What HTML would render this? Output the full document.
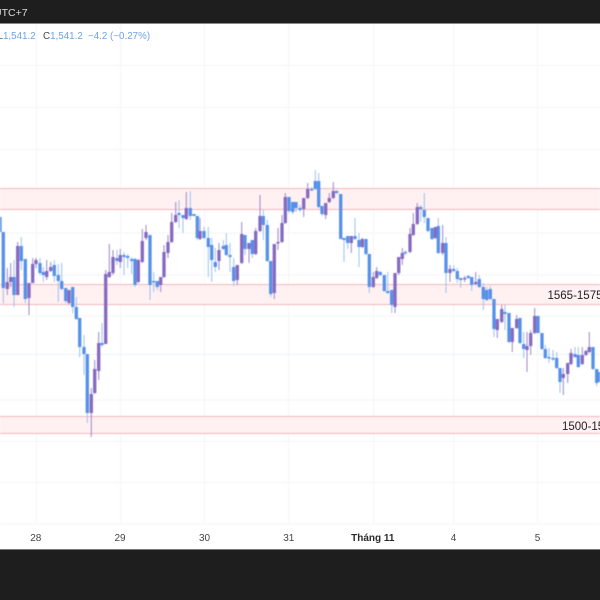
<!DOCTYPE html>
<html><head><meta charset="utf-8"><style>
html,body{margin:0;padding:0;background:#fff}
#p{position:relative;width:600px;height:600px;overflow:hidden;background:#fff;font-family:"Liberation Sans",sans-serif}
.t{position:absolute;white-space:nowrap;line-height:12px}
.a{position:absolute;top:533px;white-space:nowrap;line-height:12px;font-size:10px;color:#444;transform:translateX(-50%)}
</style></head><body><div id="p">
<svg width="600" height="600" style="position:absolute;left:0;top:0;filter:blur(.4px)" xmlns="http://www.w3.org/2000/svg">
<path fill="none" stroke="#f5f6f8" stroke-width="1" d="M36.5 23V524M120.5 23V524M204.5 23V524M288.5 23V524M373.5 23V524M453.5 23V524M537.5 23V524M0 65.5H600M0 107.5H600M0 149.5H600M0 191H600M0 233H600M0 275H600M0 316H600M0 400H600M0 441.5H600M0 482.5H600M0 524H600"/>
<path stroke="#d5e3f5" stroke-width="1" stroke-dasharray="1 1" d="M0 354.5H600"/>
<rect x="0" y="188" width="600" height="21.5" fill="#fff1f1"/>
<rect x="0" y="284.5" width="600" height="20" fill="#fff1f1"/>
<rect x="0" y="416" width="600" height="17.5" fill="#fff1f1"/>
<path fill="none" stroke="#f5b5ba" stroke-width="1.1" d="M0 188.5H600M0 209.5H600M0 284.5H600M0 304.5H600M0 416.5H600M0 433.5H600"/>
<!-- blue wicks -->
<path fill="none" stroke="#9cc0ee" stroke-width="1" d="M3.3 232V303M14 260V307M21.3 237V270M25.3 259V303M40 258V275M43.3 267V282M54.3 260V282M58.3 264V302M61.7 263V290M65.7 288V303M72.7 287V313M76.3 297V320M79.7 318V357M84 335V375M87.3 354V423M102 323V347M117 250V265M124 252V275M127.7 254V268M131.7 257V274M135 258V287M150 235V300M153.7 272V292M157.3 281V290M179 200V228M183 215V233M190.3 191V220M197.3 216V240M204 227V239M208.3 227V277M211.7 238V282M215.3 248V272M223.3 240V250M226.3 233V256M230 243V272M233.7 258V286M245 235V255M252.3 240V258M263.3 210V240M267.3 220V262M270.7 261V297M289 197V213M292.7 202V214M296 202V212M300 205V212M311.7 187V191M315.3 170V190M318.7 173V208M322 206V216M336.7 190V194M340.7 194V239M344 238V262M347.7 236V249M355 218V240M359 233V267M366 239V255M369.3 254V293M380.3 271V276M384.3 275V292M387.7 272V294M391.7 290V313M405.3 250V255M420.7 205V222M424.3 193V223M428 218V232M432 228V240M438.3 218V254M446 237V293M453.7 265V272M457.3 268V283M460.7 278V288M468.3 275V279M471.7 277V291M479.3 275V288M483.3 283V310M486.7 287V301M490.3 286V300M494 299V337M505 305V330M509 313V343M520 318V344M523.7 332V358M538 316V333M542 333V350M545.3 345V359M549 348V363M553 350V361M556.7 352V369M560 368V393M575 347V358M578.3 347V368M593 347V370M596.7 369V386"/>
<!-- purple wicks -->
<path fill="none" stroke="#9c87c8" stroke-width="1" d="M7.3 268V295M10.7 263V287M17.7 242V295M29 283V315M32.7 258V283M36 258V268M46.7 260V280M50.7 262V272M69 290V304M91.3 388V437M94.7 360V394M98.7 332V380M105.7 270V344M109.3 244V278M113 250V275M120.3 249V268M138.3 259V283M142.3 229V263M146 225V240M160.7 277V292M164 245V278M168 235V258M171.7 213V243M175.7 202V223M186.3 192V220M200 218V240M219 243V270M237.3 265V285M241.7 222V264M249 243V263M255.7 228V255M260 195V232M274.3 244V299M278 228V250M282 215V243M285.3 193V224M303.7 198V217M307.7 183V199M325.7 203V219M329.3 193V203M333.3 182V199M351.3 236V253M362.3 238V248M373.3 272V288M376.7 267V279M395 273V313M398.7 257V275M402.3 248V265M410 228V253M413.3 213V236M417.3 203V225M435.3 227V239M442.7 225V255M450 265V282M464.7 276V282M475.7 272V285M497.3 319V338M501.7 305V323M512.3 328V352M516.7 315V329M527 332V372M530.7 330V355M534.7 308V334M563.3 368V395M567.7 363V383M571 349V365M582.3 347V365M586 350V356M589.3 332V353"/>
<!-- blue bodies -->
<path fill="none" stroke="#5590e8" stroke-width="3.3" d="M0 217V232M3.3 232V288M14 277V295M21.3 246V261M25.3 259V299M40 263V273M43.3 272V275M54.3 265V276M58.3 275V281M61.7 281V289M65.7 288V301M72.7 287V307M76.3 307V319M79.7 318V347M84 347V354M87.3 354V413M102 343V345M117 258V261M124 255V257M127.7 256V258M131.7 259V261M135 259V285M150 235V285M153.7 281V282.5M157.3 281V287M179 213V215M183 215V218M190.3 208V216M194 214V216M197.3 216V238M204 231V238M208.3 238V247M211.7 245V260M215.3 262V267M223.3 246V249M226.3 245V255M230 255V257M233.7 267V281M245 235V249M252.3 240V254M263.3 216V225M267.3 225V261M270.7 261V294M289 197V211M292.7 202V212M296 202V208M300 208V210M311.7 189V190.5M315.3 181V189M318.7 181V207M322 206V214M336.7 191V193M340.7 194V239M344 238V240M347.7 236V243M355 236V239M359 240V247M366 239V254M369.3 254V287M380.3 272V275M384.3 275V291M387.7 291V293M391.7 290V305M405.3 252V253.5M420.7 207V209M424.3 210V217M428 218V231M432 228V239M438.3 226V253M446 243V273M453.7 269V271M457.3 271V279M460.7 278V280M468.3 276V278M471.7 277V285M479.3 279V287M483.3 287V299M486.7 290V300M490.3 289V299M494 299V329M505 312V314M509 313V342M520 318V343M523.7 344V349M538 316V333M542 333V349M545.3 349V358M549 357V358.5M553 358V359.5M556.7 358V368M560 368V382M575 354V357M578.3 355V367M593 347V369M596.7 369V383M600 372V382"/>
<!-- purple bodies -->
<path fill="none" stroke="#8569c0" stroke-width="3.3" d="M7.3 282V289M10.7 277V282M17.7 246V295M29 283V298M32.7 264V283M36 260V264M46.7 271V277M50.7 267V271M69 290V303M91.3 394V413M94.7 369V393M98.7 343V371M105.7 274V344M109.3 272V277M113 257V273M120.3 255V262M138.3 260V282M142.3 241V262M146 232V238M160.7 277V285M164 252V277M168 242V253M171.7 222V242M175.7 215V222M186.3 208V219M200 231V239M219 250V261M237.3 265V280M241.7 234V263M249 243V249M255.7 231V254M260 216V231M274.3 244V293M278 242V243.5M282 223V242M285.3 197V223M303.7 198V209M307.7 189V198M325.7 203V215M329.3 198V202M333.3 191V198M351.3 236V243M362.3 239V247M373.3 277V287M376.7 271V278M395 273V307M398.7 257V273M402.3 253V259M410 234V252M413.3 224V235M417.3 207V224M435.3 227V238M442.7 243V253M450 269V273M464.7 278V279.5M475.7 282V284M497.3 319V330M501.7 309V322M512.3 328V342M516.7 319V328M527 346V350M530.7 333V346M534.7 316V333M563.3 374V378M567.7 363V374M571 353V364M582.3 355V364M586 351V355M589.3 347V352"/>
</svg>
<div style="position:absolute;left:0;top:0;width:600px;height:23px;background:#1e1e1e;border-bottom:1px solid #8a8a8a"></div>
<div style="position:absolute;left:0;top:549px;width:600px;height:51px;background:#1e1e1e;border-top:1px solid #777;box-sizing:border-box"></div>
<div class="t" style="left:-6px;top:7px;font-size:10.5px;color:#dcdcdc">UTC+7</div>
<div class="t" style="left:-2.5px;top:31px;font-size:9.8px;color:#6ea3e8"><span style="color:#555">L</span>1,541.2</div>
<div class="t" style="left:43px;top:31px;font-size:9.8px;color:#6ea3e8"><span style="color:#444">C</span>1,541.2</div>
<div class="t" style="left:88px;top:31px;font-size:9.8px;color:#6ea3e8">−4.2 (−0.27%)</div>
<div class="t" style="left:547.5px;top:290px;font-size:11.5px;color:#222">1565-1575</div>
<div class="t" style="left:562px;top:421px;font-size:11.5px;color:#222">1500-15</div>
<div class="a" style="left:35.8px">28</div>
<div class="a" style="left:120px">29</div>
<div class="a" style="left:204.5px">30</div>
<div class="a" style="left:288.8px">31</div>
<div class="a" style="left:372.8px;font-weight:bold;color:#2a2a2a">Tháng 11</div>
<div class="a" style="left:453.5px">4</div>
<div class="a" style="left:537.5px">5</div>
</div></body></html>
